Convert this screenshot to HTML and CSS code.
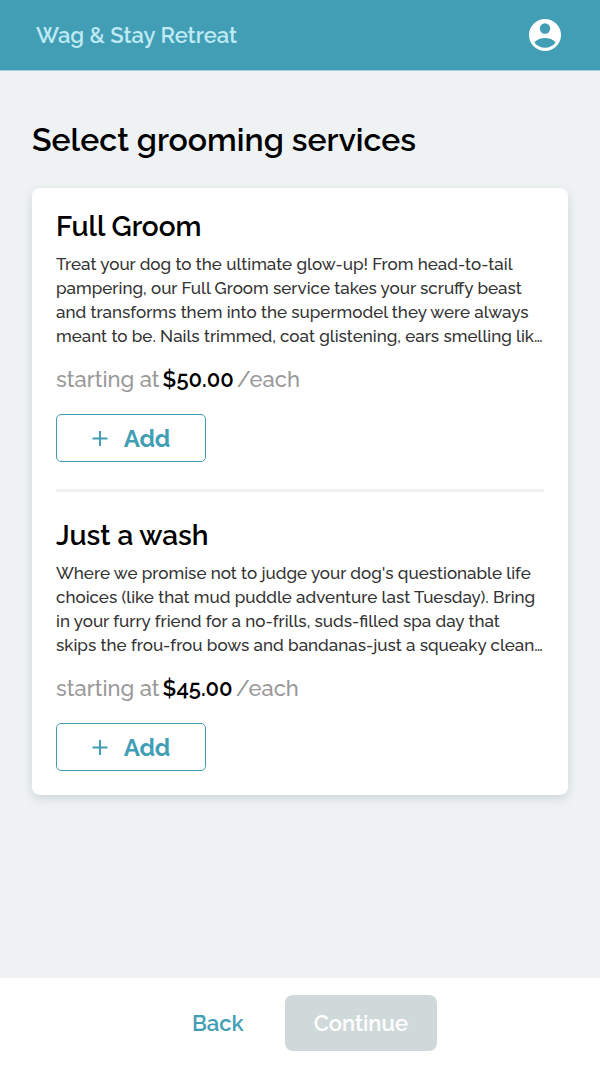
FILE: index.html
```
<!DOCTYPE html>
<html lang="en">
<head>
	<meta charset="UTF-8">
	<meta name="viewport" content="width=device-width, initial-scale=1.0">
	<title>Wag &amp; Stay Retreat</title>
	<link rel="stylesheet" href="styles.css">
</head>
<body>

	<header class="topbar">
		<a href="#" class="brand">Wag &amp; Stay Retreat</a>
		<button type="button" class="account" aria-label="Account">
			<svg viewBox="0 0 32 32" width="32" height="32" aria-hidden="true">
				<circle cx="16" cy="16" r="16" fill="#fff"/>
				<circle cx="16" cy="9.5" r="5.2" fill="#419eb5"/>
				<path d="M5.3 23.3C8 20.4 12 19 16 19s8 1.400 10.700 4.300C24.200 26.900 20.400 28.800 16 28.800S7.800 26.900 5.300 23.300z" fill="#419eb5"/>
			</svg>
		</button>
	</header>

	<main class="content">
		<h1 class="title">Select grooming services</h1>

		<div class="card">
			<section class="service">
				<h2 class="name">Full Groom</h2>
				<p class="describe">Treat your dog to the ultimate glow-up! From head-to-tail pampering, our Full Groom service takes your scruffy beast and transforms them into the supermodel they were always meant to be. Nails trimmed, coat glistening, ears smelling lik…</p>
				<div class="price"><span>starting at</span><strong>$50.00</strong><span>/each</span></div>
				<button type="button" class="add">
					<svg viewBox="0 0 16 16" width="16" height="16" aria-hidden="true"><path d="M8 1v15M0.500 8.500h15" stroke="currentColor" stroke-width="2"/></svg>
					Add
				</button>
			</section>
			<section class="service">
				<h2 class="name">Just a wash</h2>
				<p class="describe">Where we promise not to judge your dog's questionable life choices (like that mud puddle adventure last Tuesday). Bring in your furry friend for a no-frills, suds-filled spa day that skips the frou-frou bows and bandanas-just a squeaky clean…</p>
				<div class="price"><span>starting at</span><strong>$45.00</strong><span>/each</span></div>
				<button type="button" class="add">
					<svg viewBox="0 0 16 16" width="16" height="16" aria-hidden="true"><path d="M8 1v15M0.500 8.500h15" stroke="currentColor" stroke-width="2"/></svg>
					Add
				</button>
			</section>
		</div>
	</main>

	<footer class="actions">
		<button type="button" class="back">Back</button>
		<button type="button" class="continue" disabled>Continue</button>
	</footer>

</body>
</html>
```
FILE: styles.css
```
* {
	box-sizing: border-box;
	margin: 0;
	padding: 0;
}

body {
	display: flex;
	flex-direction: column;
	min-height: 100vh;
	background-color: #eff2f3;
	color: #000;
	font-family: Raleway, Lato, sans-serif;
}

button {
	border: none;
	background: none;
	font-family: inherit;
	cursor: pointer;
}

.topbar {
	display: flex;
	justify-content: space-between;
	align-items: center;
	height: 71px;
	padding: 0 39px 0 36px;
	background-color: #419eb5;
	border-bottom: 1px solid #a5d3de;
}

.brand {
	color: #bfe9f3;
	font-size: 22px;
	font-weight: 600;
	text-decoration: none;
}

.account {
	display: flex;
}

.content {
	flex: 1;
	padding: 49px 32px 32px;
}

.title {
	margin-bottom: 28px;
	font-size: 32px;
	font-weight: 600;
	line-height: 40px;
}

.card {
	padding: 24px;
	border-radius: 8px;
	background-color: #fff;
	box-shadow: 0 4px 10px rgba(90, 120, 140, 0.22);
}

.service + .service {
	margin-top: 27px;
	padding-top: 29px;
	border-top: 3px solid #f0f1f2;
}

.name {
	margin-bottom: 10px;
	font-size: 28px;
	font-weight: 600;
	line-height: 30px;
}

.describe {
	color: #333;
	font-size: 17px;
	font-weight: 500;
	line-height: 24px;
}

.price {
	display: flex;
	gap: 3px;
	margin: 16px 0 20px;
	color: #999;
	font-size: 22px;
	font-weight: 500;
	line-height: 30px;
}

.price strong {
	color: #000;
	font-weight: 600;
}

.add {
	display: flex;
	justify-content: center;
	align-items: center;
	gap: 16px;
	width: 150px;
	height: 48px;
	border: 1px solid #419eb5;
	border-radius: 5px;
	color: #419eb5;
	font-size: 24px;
	font-weight: 700;
}

.actions {
	display: flex;
	justify-content: center;
	align-items: center;
	gap: 12px;
	height: 90px;
	background-color: #fff;
}

.back,
.continue {
	height: 56px;
	padding: 0 29px;
	border-radius: 8px;
	font-size: 22px;
	font-weight: 600;
}

.back {
	color: #419eb5;
}

.continue {
	background-color: #d0d9da;
	color: #fff;
	cursor: default;
}
```
